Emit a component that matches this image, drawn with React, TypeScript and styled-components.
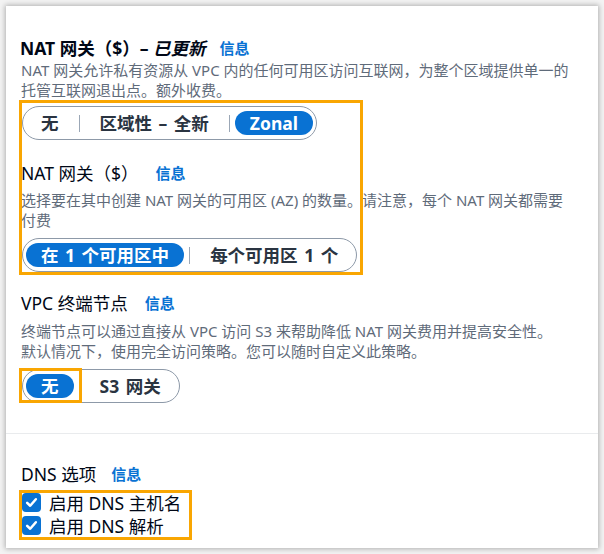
import React from "react";
import styled, { createGlobalStyle } from "styled-components";

const GlobalStyle = createGlobalStyle`
  html, body {
    margin: 0;
    padding: 0;
    background: #f3f3f3;
  }
  body {
    font-family: "Noto Sans", "Noto Sans CJK SC", sans-serif;
    color: #000716;
    -webkit-font-smoothing: antialiased;
  }
`;

const Panel = styled.div`
  position: relative;
  margin: 6px;
  width: 592px;
  height: 542px;
  box-sizing: border-box;
  background: #ffffff;
  box-shadow: 0 0 5px 1px rgba(0, 0, 0, 0.28);
  display: flex;
  flex-direction: column;
`;

const Section = styled.section<{ $top: number; $bottom?: number }>`
  display: flex;
  flex-direction: column;
  align-items: flex-start;
  padding: ${(p) => p.$top}px 14px ${(p) => p.$bottom ?? 0}px 15px;
`;

const Divider = styled.hr`
  margin: 30px 0 0;
  border: none;
  border-top: 1px solid #e9ebed;
  width: 100%;
`;

const Title = styled.h2`
  margin: 0 0 0 -1px;
  font-size: 17.5px;
  line-height: 22px;
  font-weight: 700;
  display: flex;
  align-items: center;
  gap: 14px;
  em {
    font-style: italic;
  }
`;

const Heading = styled.div<{ $mt: number; $gap: number }>`
  margin-top: ${(p) => p.$mt}px;
  font-size: 17.5px;
  line-height: 22px;
  font-weight: 400;
  display: flex;
  align-items: center;
  gap: ${(p) => p.$gap}px;
`;

const InfoLink = styled.a`
  color: #0972d3;
  font-weight: 700;
  font-size: 15px;
  text-decoration: none;
`;

const Description = styled.p<{ $mt: number; $lh: number }>`
  margin: ${(p) => p.$mt}px 0 0;
  font-size: 15px;
  line-height: ${(p) => p.$lh}px;
  color: #5f6b7a;
  max-width: 556px;
`;

const Segmented = styled.div<{ $mt: number }>`
  margin: ${(p) => p.$mt}px 0 0 1px;
  display: inline-flex;
  align-items: center;
  height: 34px;
  box-sizing: border-box;
  padding: 0 3px;
  border: 1px solid #8d99a8;
  border-radius: 17px;
`;

const SegOption = styled.button<{ $selected?: boolean }>`
  height: 24px;
  padding: 0 15px;
  border: none;
  border-radius: 12px;
  background: ${(p) => (p.$selected ? "#0972d3" : "transparent")};
  color: ${(p) => (p.$selected ? "#ffffff" : "#2a3441")};
  font-family: inherit;
  font-size: 17.5px;
  font-weight: 700;
  line-height: 24px;
  word-spacing: 2px;
  white-space: nowrap;
  cursor: pointer;
`;

const SegDivider = styled.span`
  width: 1px;
  height: 17px;
  margin: 0 5px;
  background: #9ba7b6;
`;

const CheckList = styled.div`
  margin: 6px 0 0 1px;
  display: flex;
  flex-direction: column;
`;

const CheckRow = styled.label`
  display: flex;
  align-items: center;
  gap: 8px;
  height: 23px;
  font-size: 17.5px;
  color: #000716;
`;

const CheckBox = styled.span`
  width: 19px;
  height: 19px;
  border-radius: 4px;
  background: #0972d3;
  display: flex;
  align-items: center;
  justify-content: center;
`;

const Highlight = styled.div<{ $x: number; $y: number; $w: number; $h: number }>`
  position: absolute;
  left: ${(p) => p.$x}px;
  top: ${(p) => p.$y}px;
  width: ${(p) => p.$w}px;
  height: ${(p) => p.$h}px;
  box-sizing: border-box;
  border: 3px solid #f9a602;
  pointer-events: none;
`;

const Check = () => (
  <svg width="13" height="13" viewBox="0 0 14 14" fill="none">
    <path d="M2.3 7.3 L5.6 10.5 L11.7 3.5" stroke="#fff" strokeWidth="2.7" strokeLinecap="round" strokeLinejoin="round" />
  </svg>
);

export default function App() {
  return (
    <>
      <GlobalStyle />
      <Panel>
        <Section $top={31}>
          <Title>
            <span>
              NAT 网关（$）– <em>已更新</em>
            </span>
            <InfoLink>信息</InfoLink>
          </Title>
          <Description $mt={2} $lh={19.5}>
            NAT 网关允许私有资源从 VPC 内的任何可用区访问互联网，为整个区域提供单一的托管互联网退出点。额外收费。
          </Description>
          <Segmented $mt={6}>
            <SegOption>无</SegOption>
            <SegDivider />
            <SegOption>区域性 – 全新</SegOption>
            <SegDivider />
            <SegOption $selected>Zonal</SegOption>
          </Segmented>
          <Heading $mt={22} $gap={17}>
            <span>NAT 网关（$）</span>
            <InfoLink>信息</InfoLink>
          </Heading>
          <Description $mt={7} $lh={19.5}>
            选择要在其中创建 NAT 网关的可用区 (AZ) 的数量。请注意，每个 NAT 网关都需要付费
          </Description>
          <Segmented $mt={8}>
            <SegOption $selected>在 1 个可用区中</SegOption>
            <SegDivider />
            <SegOption>每个可用区 1 个</SegOption>
          </Segmented>
          <Heading $mt={20} $gap={17}>
            <span>VPC 终端节点</span>
            <InfoLink>信息</InfoLink>
          </Heading>
          <Description $mt={7} $lh={20}>
            终端节点可以通过直接从 VPC 访问 S3 来帮助降低 NAT 网关费用并提高安全性。
            <br />
            默认情况下，使用完全访问策略。您可以随时自定义此策略。
          </Description>
          <Segmented $mt={8}>
            <SegOption $selected>无</SegOption>
            <SegDivider />
            <SegOption>S3 网关</SegOption>
          </Segmented>
        </Section>
        <Divider />
        <Section $top={29} $bottom={10}>
          <Heading $mt={0} $gap={15}>
            <span>DNS 选项</span>
            <InfoLink>信息</InfoLink>
          </Heading>
          <CheckList>
            <CheckRow>
              <CheckBox>
                <Check />
              </CheckBox>
              启用 DNS 主机名
            </CheckRow>
            <CheckRow>
              <CheckBox>
                <Check />
              </CheckBox>
              启用 DNS 解析
            </CheckRow>
          </CheckList>
        </Section>
        <Highlight $x={13} $y={94} $w={344} $h={175} />
        <Highlight $x={13} $y={362} $w={63} $h={35} />
        <Highlight $x={13} $y={484} $w={173} $h={50} />
      </Panel>
    </>
  );
}
